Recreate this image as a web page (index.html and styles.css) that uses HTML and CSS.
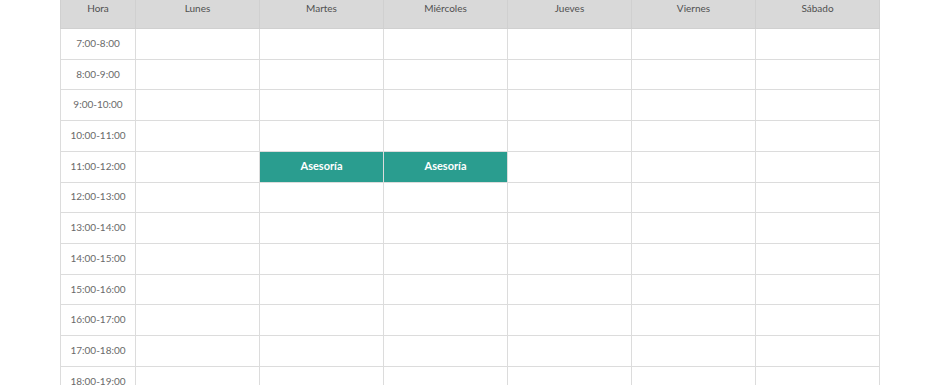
FILE: index.html
```html
<!DOCTYPE html>
<html lang="es">
<head>
<meta charset="utf-8">
<link rel="stylesheet" href="styles.css">
</head>
<body>
<div class="wrap">
<table class="schedule">
<colgroup>
<col class="c-hora"><col class="c-day"><col class="c-day"><col class="c-day"><col class="c-day"><col class="c-day"><col class="c-day">
</colgroup>
<thead>
<tr><th>Hora</th><th>Lunes</th><th>Martes</th><th>Miércoles</th><th>Jueves</th><th>Viernes</th><th>Sábado</th></tr>
</thead>
<tbody>
<tr><td class="time">7:00-8:00</td><td></td><td></td><td></td><td></td><td></td><td></td></tr>
<tr><td class="time">8:00-9:00</td><td></td><td></td><td></td><td></td><td></td><td></td></tr>
<tr><td class="time">9:00-10:00</td><td></td><td></td><td></td><td></td><td></td><td></td></tr>
<tr><td class="time">10:00-11:00</td><td></td><td></td><td></td><td></td><td></td><td></td></tr>
<tr><td class="time">11:00-12:00</td><td></td><td class="busy">Asesoría</td><td class="busy">Asesoría</td><td></td><td></td><td></td></tr>
<tr><td class="time">12:00-13:00</td><td></td><td></td><td></td><td></td><td></td><td></td></tr>
<tr><td class="time">13:00-14:00</td><td></td><td></td><td></td><td></td><td></td><td></td></tr>
<tr><td class="time">14:00-15:00</td><td></td><td></td><td></td><td></td><td></td><td></td></tr>
<tr><td class="time">15:00-16:00</td><td></td><td></td><td></td><td></td><td></td><td></td></tr>
<tr><td class="time">16:00-17:00</td><td></td><td></td><td></td><td></td><td></td><td></td></tr>
<tr><td class="time">17:00-18:00</td><td></td><td></td><td></td><td></td><td></td><td></td></tr>
<tr><td class="time">18:00-19:00</td><td></td><td></td><td></td><td></td><td></td><td></td></tr>
<tr><td class="time">19:00-20:00</td><td></td><td></td><td></td><td></td><td></td><td></td></tr>
</tbody>
</table>
</div>
</body>
</html>
```
FILE: styles.css
```css
html, body {
  margin: 0;
  padding: 0;
  background: #fff;
  overflow: hidden;
}
.wrap {
  padding-left: 60px;
  margin-top: -10px;
}
.schedule {
  border-collapse: collapse;
  table-layout: fixed;
  width: 817px;
  font-family: Lato, "Open Sans", sans-serif;
  font-size: 10px;
  color: #555;
}
.c-hora { width: 75px; }
.c-day { width: 124px; }
.schedule th {
  background: #d9d9d9;
  font-weight: normal;
  height: 38px;
  padding: 0 0 3px;
  border: 1px solid #d0d0d0;
  text-align: center;
  color: #505050;
  box-sizing: border-box;
}
.schedule td {
  height: 30.73px;
  padding: 0 0 2px;
  border: 1px solid #dcdcdc;
  text-align: center;
  box-sizing: border-box;
}
.schedule td.time {
  color: #6a6a6a;
}
.schedule td.busy {
  background: #2a9d8f;
  color: #fff;
  font-weight: bold;
  font-size: 11px;
}
```
